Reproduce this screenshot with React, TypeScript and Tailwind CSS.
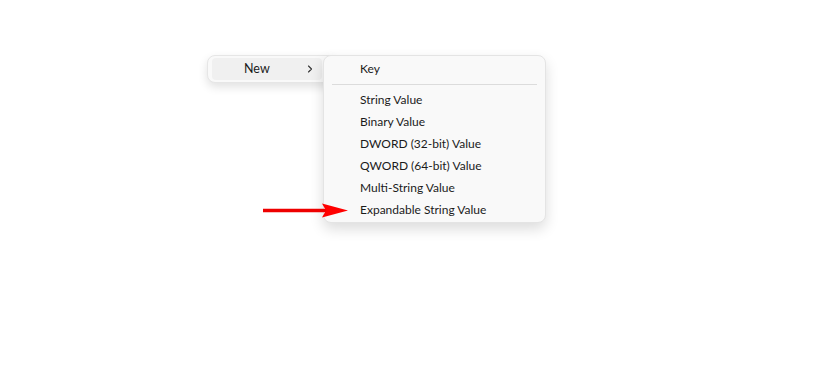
import { ChevronRight } from "lucide-react";

const items = [
  "String Value",
  "Binary Value",
  "DWORD (32-bit) Value",
  "QWORD (64-bit) Value",
  "Multi-String Value",
  "Expandable String Value",
];

export default function App() {
  return (
    <div className="relative w-[838px] h-[366px] bg-white overflow-hidden font-['Lato',sans-serif] text-[12px] text-[#1b1b1b]">
      {/* parent context menu */}
      <div className="absolute left-[207px] top-[55px] w-[130px] h-[28px] rounded-lg border border-[#e6e6e6] bg-[#f9f9f9] shadow-[0_4px_10px_rgba(0,0,0,0.12)] px-[4px] py-[2px]">
        <div className="flex items-center h-[22px] w-[110px] rounded-[4px] bg-[#f0f0f0] pl-[32px] pr-[6px]">
          <span className="flex-1 text-[12.5px]">New</span>
          <ChevronRight size={12} strokeWidth={2.2} className="text-[#333]" />
        </div>
      </div>

      {/* submenu */}
      <div className="absolute left-[323px] top-[55px] w-[223px] rounded-lg border border-[#e4e4e4] bg-[#f9f9f9] shadow-[0_6px_14px_rgba(0,0,0,0.14)] pt-[2px] pb-[1px] flex flex-col">
        <div className="h-[22px] flex items-center pl-[36px]">Key</div>
        <div className="mx-[8px] my-[4px] h-px bg-[#dcdcdc]" />
        {items.map((t) => (
          <div key={t} className="h-[22px] flex items-center pl-[36px]">
            {t}
          </div>
        ))}
      </div>

      {/* annotation arrow */}
      <svg className="absolute left-[260px] top-[200px]" width="92" height="22" viewBox="0 0 92 22">
        <line x1="3" y1="10.5" x2="68" y2="10.5" stroke="#ee0000" strokeWidth="3.5" />
        <polygon points="62,3.5 88,10.5 62,17.5 66,10.5" fill="#ff0000" />
      </svg>
    </div>
  );
}
